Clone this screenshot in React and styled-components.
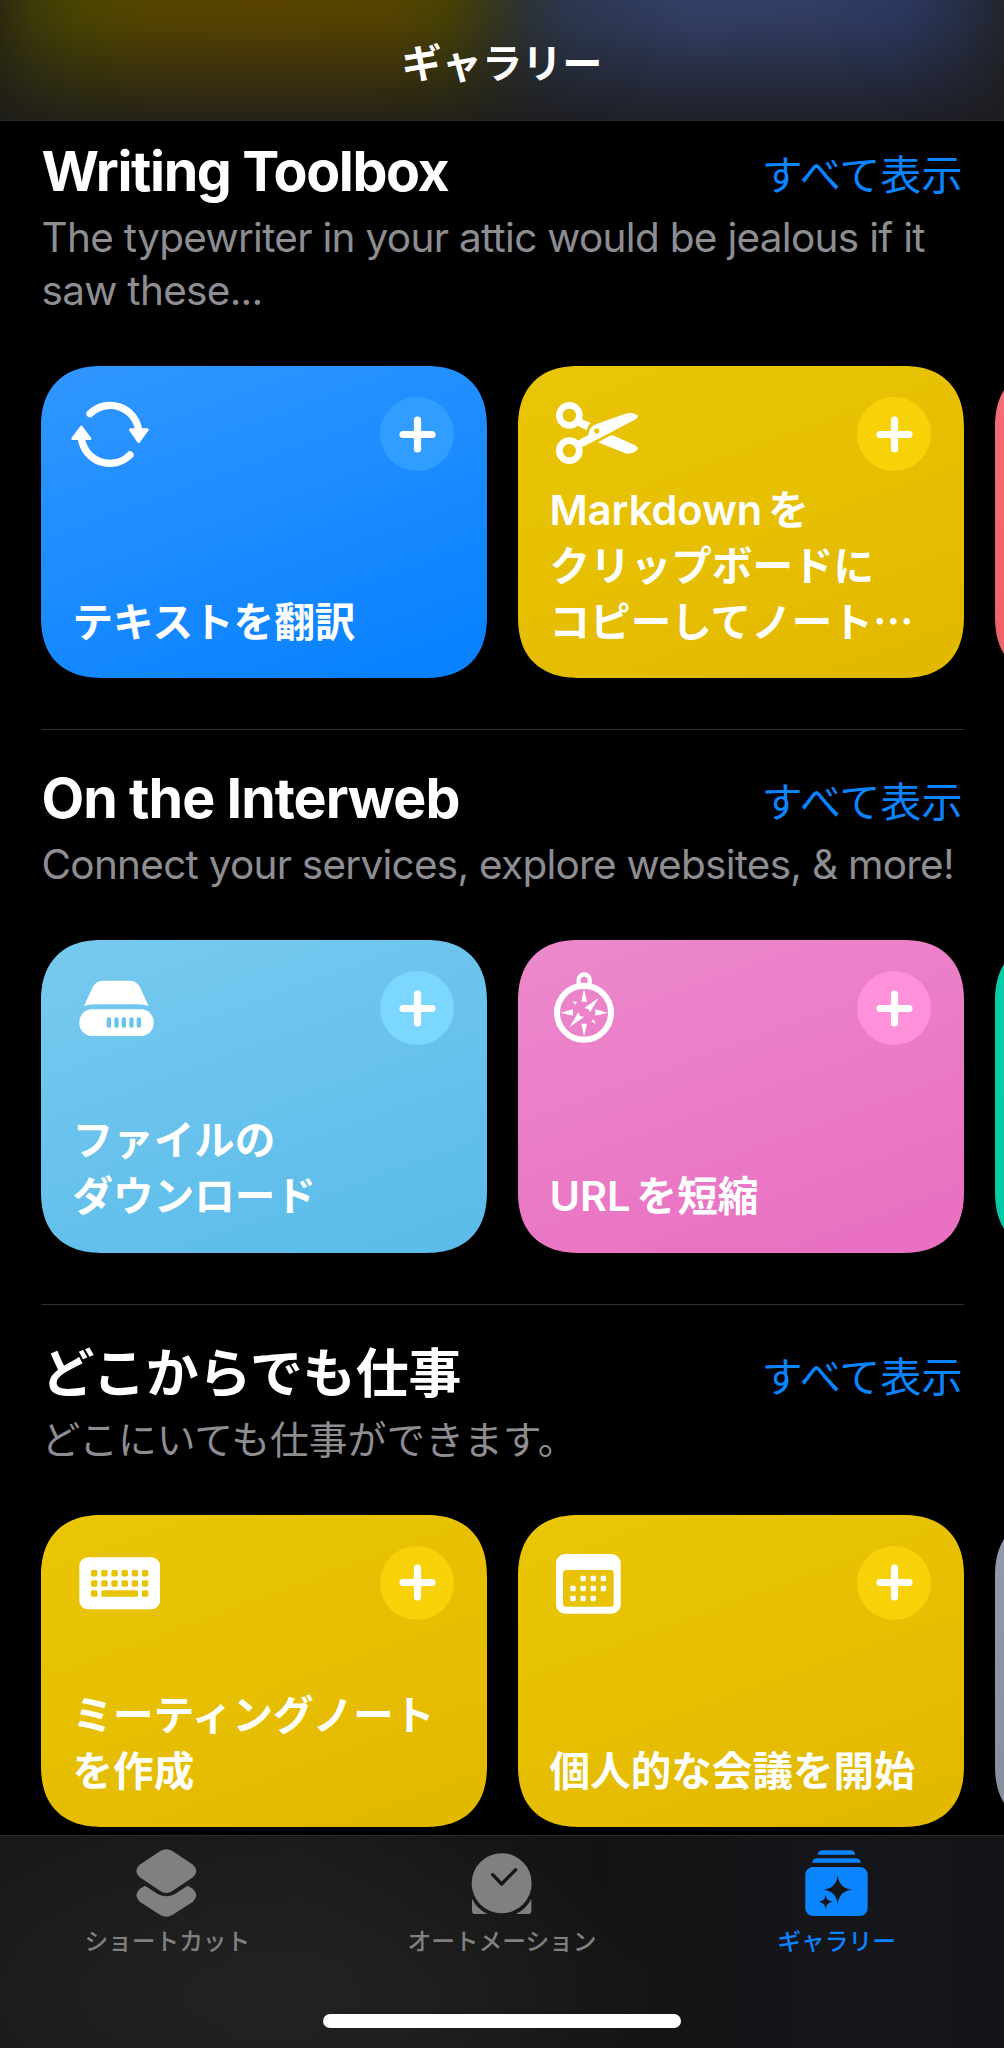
import React from "react";
import styled, { createGlobalStyle } from "styled-components";

const JP = `"Noto Sans CJK JP", "Inter", sans-serif`;
const LATIN = `"Inter", "Noto Sans CJK JP", sans-serif`;

const GlobalStyle = createGlobalStyle`
  body { margin: 0; background: #000; }
  *, *::before, *::after { box-sizing: border-box; }
`;

const Screen = styled.div`
  width: 1004px;
  height: 2048px;
  display: flex;
  flex-direction: column;
  overflow: hidden;
  background: #000;
  color: #fff;
  font-family: ${JP};
`;

const NavBar = styled.header`
  flex: none;
  height: 121px;
  display: flex;
  justify-content: center;
  align-items: flex-end;
  padding-bottom: 31px;
  border-bottom: 1px solid #2c2c2e;
  background:
    linear-gradient(to bottom, rgba(27, 26, 28, 0) 0%, rgba(27, 26, 28, 0.08) 20%, rgba(27, 26, 28, 0.83) 100%),
    linear-gradient(to right, #2e2b0e 0, #3e3b08 35px, #4b4500 80px, #564500 150px, #594400 270px, #564400 390px,
      #484203 445px, #38371c 490px, #2d3336 525px, #2c3750 570px, #333f66 690px, #323e64 800px, #2c3860 900px, #272f48 960px, #22252d 1004px);
`;

const NavTitle = styled.h1`
  margin: 0;
  font-size: 40.2px;
  line-height: 56px;
  font-weight: 600;
`;

const Feed = styled.main`
  flex: 1;
  min-height: 0;
  overflow: hidden;
  display: flex;
  flex-direction: column;
`;

const SectionBox = styled.section`
  flex: none;
  margin: 0 40.5px;
  padding: ${(p) => (p.$first ? "16px" : "34px")} 0 51px;
  border-bottom: 1px solid ${(p) => (p.$last ? "transparent" : "#303032")};
`;

const SectionHead = styled.div`
  display: flex;
  justify-content: space-between;
  height: 68px;
  padding: 0 1px 0 1px;
`;

const SectionTitle = styled.h2`
  margin: 0;
  white-space: nowrap;
  font-family: ${(p) => (p.$jp ? JP : LATIN)};
  font-size: ${(p) => (p.$jp ? 52.9 : 55.5)}px;
  line-height: ${(p) => (p.$jp ? 62 : 67)}px;
  font-weight: 700;
  letter-spacing: ${(p) => p.$track || 0}px;
`;

const ShowAll = styled.a`
  color: #0a84ff;
  font-size: 41.1px;
  line-height: 68px;
  padding-top: 1px;
  font-weight: 400;
`;

const Subtitle = styled.p`
  margin: 6px 0 ${(p) => (p.$jp ? 53 : 49)}px;
  padding-left: 1px;
  color: #8d8d92;
  font-family: ${(p) => (p.$jp ? JP : LATIN)};
  font-size: ${(p) => (p.$jp ? 38.8 : 40.5)}px;
  line-height: ${(p) => (p.$jp ? 49 : 53)}px;
  white-space: pre;
  letter-spacing: ${(p) => p.$track || 0}px;
`;

const CardRow = styled.div`
  display: flex;
  gap: 31px;
  margin-right: -41px;
  overflow: hidden;
`;

const CardBox = styled.article`
  flex: none;
  width: 446px;
  height: 312.3px;
  border-radius: 50px;
  padding: 31px 32.5px 30.3px 30px;
  display: flex;
  flex-direction: column;
  justify-content: space-between;
  background: linear-gradient(160deg, ${(p) => p.$from}, ${(p) => p.$to} 90%);

  @supports (corner-shape: superellipse(1.25)) {
    border-radius: 62px;
    corner-shape: superellipse(1.25);
  }
`;

const CardTop = styled.div`
  display: flex;
  justify-content: space-between;
  height: 74px;
`;

const AddButton = styled.button`
  width: 74px;
  height: 74px;
  padding: 0;
  border: 0;
  border-radius: 50%;
  background: ${(p) => p.$tint};
  display: flex;
  align-items: center;
  justify-content: center;
`;

const CardTitle = styled.h3`
  margin: 0;
  padding-left: 2px;
  display: flex;
  flex-direction: column;
  font-size: 40.6px;
  line-height: 56px;
  font-weight: 600;
  white-space: nowrap;
`;

const TitleLine = styled.span`
  display: flex;
  align-items: baseline;
  gap: 6px;
  height: 56px;
`;

const Latin = styled.span`
  font-family: ${LATIN};
  font-size: 41.5px;
  line-height: 1;
`;

const TabBar = styled.nav`
  flex: none;
  height: 213px;
  border-top: 1px solid #2b2b2d;
  display: flex;
  flex-direction: column;
  justify-content: space-between;
  align-items: center;
  padding-bottom: 20px;
  background:
    radial-gradient(ellipse 420px 170px at 28% 75%, rgba(36, 36, 36, 0.85), rgba(30, 30, 30, 0)),
    linear-gradient(to right, #191919 0, #1b1b1b 300px, #131313 600px, #14161a 850px, #131519 1004px);
`;

const Tabs = styled.div`
  width: 100%;
  display: grid;
  grid-template-columns: repeat(3, 1fr);
  padding-top: 11px;
`;

const Tab = styled.a`
  display: flex;
  flex-direction: column;
  align-items: center;
  color: ${(p) => (p.$active ? "#0a84ff" : "#808080")};
`;

const TabLabel = styled.span`
  font-size: 23.7px;
  line-height: 34px;
  margin-top: 4px;
  font-weight: 500;
`;

const HomeIndicator = styled.div`
  width: 358px;
  height: 14px;
  border-radius: 7px;
  background: #fff;
`;

const Glyph = ({ x, y, children }) => (
  <svg width="96" height="74" viewBox={`${x} ${y} 288 222`} fill="#fff">
    {children}
  </svg>
);

const SyncIcon = () => (
  <Glyph x={122} y={141}>
    <g fill="none" stroke="#fff" strokeWidth="22" strokeLinecap="round">
      <path d="M179 191 A86 86 0 0 1 325 242" />
      <path d="M299 315 A86 86 0 0 1 153 264" />
    </g>
    <g stroke="#fff" strokeWidth="8" strokeLinejoin="round">
      <path d="M300 239 H351 L325 275 Z" />
      <path d="M127 266 H179 L153 231 Z" />
    </g>
  </Glyph>
);

const ScissorsIcon = () => (
  <Glyph x={144} y={141}>
    <g fill="none" stroke="#fff" strokeWidth="20">
      <circle cx="208" cy="196" r="30" />
      <circle cx="208" cy="302" r="30" />
    </g>
    <path d="M243 207 L272 219 Q262 228 260 241 L230 226 Z" />
    <path d="M294 277 L330 257 Q336 254 342 257 L405 286 Q413 291 414 298 Q400 314 376 310 Z" />
    <path
      fillRule="evenodd"
      d="M230 273 L258 259 Q266 256 267 245 Q270 230 290 222 L376 191 Q402 184 414 198 Q410 209 396 214 L248 291 Z M290 235 a8 8 0 1 0 0.1 0 Z"
    />
  </Glyph>
);

const DriveIcon = () => (
  <Glyph x={122} y={154}>
    <path d="M161 259 L186 205 Q196 183 217 183 H299 Q319 183 329 203 L355 259 Q340 254 320 254 H195 Q175 254 161 259 Z" />
    <rect x="147" y="269" width="223" height="80" rx="38" />
    {[229, 252, 274, 297, 319].map((x) => (
      <rect key={x} x={x} y="293" width="13" height="31" rx="5" fill="#68c4ed" />
    ))}
  </Glyph>
);

const CompassIcon = () => (
  <Glyph x={144} y={154}>
    <circle cx="252" cy="279" r="81" fill="none" stroke="#fff" strokeWidth="18" />
    <path d="M236 194 V181 A16 16 0 0 1 269 181 V194" fill="none" stroke="#fff" strokeWidth="13" />
    <path d="M252 207 L261 246 H244 Z M252 352 L261 312 H244 Z M181 279 L219 269 V288 Z M324 279 L286 269 V288 Z" />
    <path d="M296 235 L270 278 L265 268 L253 265 Z M209 322 L235 278 L240 288 L252 292 Z" />
    <path d="M217 243 L231 248 L226 255 Z M288 312 L274 306 L280 299 Z" />
  </Glyph>
);

const KeyboardIcon = () => (
  <Glyph x={122} y={136}>
    <rect x="147" y="170" width="242" height="156" rx="26" />
    <g fill="#e8c305">
      {[208, 238.5].map((y) =>
        [0, 1, 2, 3, 4, 5].map((i) => (
          <rect key={`${y}-${i}`} x={182 + i * 30.5} y={y} width="19.5" height="19.5" rx="5" />
        ))
      )}
      <rect x="182" y="269" width="19.5" height="19.5" rx="5" />
      <rect x="213" y="269" width="110" height="19.5" rx="5" />
      <rect x="334.5" y="269" width="19.5" height="19.5" rx="5" />
    </g>
  </Glyph>
);

const CalendarIcon = () => (
  <Glyph x={144} y={136}>
    <rect x="168" y="160" width="194" height="179" rx="27" />
    <rect x="189" y="208" width="152" height="110" rx="9" fill="#e8c305" />
    {[[1, 2, 3], [0, 1, 2, 3], [0, 1, 2]].map((cols, r) =>
      cols.map((c) => (
        <rect key={`${r}-${c}`} x={211 + c * 30.4} y={225.5 + r * 30} width="16" height="16" rx="3.5" />
      ))
    )}
  </Glyph>
);

const PlusIcon = () => (
  <svg width="37" height="37" viewBox="0 0 37 37" stroke="#fff" strokeWidth="7.2" strokeLinecap="round">
    <path d="M18.5 4 V33 M4 18.5 H33" />
  </svg>
);

const TabGlyph = ({ x, children }) => (
  <svg width="72" height="72" viewBox={`${x} 36 216 216`} fill="currentColor">
    {children}
  </svg>
);

const ShortcutsIcon = () => (
  <TabGlyph x={64}>
    <path d="M153 47 Q170 38 187 47 L250 89 Q270 108 250 127 L188 168 Q170 180 152 168 L90 127 Q70 108 90 89 Z" />
    <path d="M106 152 L90 162 Q70 181 90 200 L152 240 Q170 251 188 240 L250 200 Q270 181 250 162 L234 152 L196 177 Q170 191 144 177 Z" />
  </TabGlyph>
);

const AutomationIcon = () => (
  <TabGlyph x={1068}>
    <circle cx="1175" cy="144.5" r="90" />
    <path d="M1086 191 Q1098 219 1132 237 H1096 Q1086 237 1086 227 Z" />
    <path d="M1264 191 Q1252 219 1218 237 H1254 Q1264 237 1264 227 Z" />
    <path
      d="M1148 119 L1175 147 L1217 104"
      fill="none"
      stroke="#171717"
      strokeWidth="10"
      strokeLinecap="round"
      strokeLinejoin="round"
    />
  </TabGlyph>
);

const GalleryIcon = () => (
  <TabGlyph x={121}>
    <path d="M171 59 Q173 46 186 46 H269 Q281 46 284 59 Z" />
    <path d="M154 83 Q157 70 171 70 H285 Q298 70 301 83 Z" />
    <rect x="134" y="96" width="187" height="147" rx="23" />
    <g fill="#141518">
      <path d="M231 121 Q235 160 273 164 Q235 168 231 208 Q227 168 189 164 Q227 160 231 121 Z" />
      <path d="M195 179 Q197 198 216 200 Q197 202 195 222 Q193 202 174 200 Q193 198 195 179 Z" />
    </g>
  </TabGlyph>
);

const YELLOW = { from: "#eac606", to: "#e3b900", tint: "#f8d208" };
const BLUE = { from: "#3197ff", to: "#0a82ff", tint: "#319eff" };
const CYAN = { from: "#77caef", to: "#5cbcea", tint: "#7bd7ff" };
const PINK = { from: "#ec89cc", to: "#e970c2", tint: "#ff90da" };
const RED = { from: "#f56f76", to: "#ec5a61", tint: "#ff8a8f" };
const TEAL = { from: "#0accaa", to: "#00c8a6", tint: "#2fe0c0" };
const GRAY = { from: "#929ba9", to: "#828b99", tint: "#a5adba" };

const Card = ({ color, icon, lines }) => (
  <CardBox $from={color.from} $to={color.to}>
    {icon && (
      <CardTop>
        {icon}
        <AddButton $tint={color.tint} aria-label="追加">
          <PlusIcon />
        </AddButton>
      </CardTop>
    )}
    {lines && (
      <CardTitle>
        {lines.map((line, i) => (
          <TitleLine key={i}>{line}</TitleLine>
        ))}
      </CardTitle>
    )}
  </CardBox>
);

const Section = ({ title, subtitle, jp, track, subTrack, first, last, children }) => (
  <SectionBox $first={first} $last={last}>
    <SectionHead>
      <SectionTitle $jp={jp} $track={track}>{title}</SectionTitle>
      <ShowAll>すべて表示</ShowAll>
    </SectionHead>
    <Subtitle $jp={jp} $track={subTrack}>{subtitle}</Subtitle>
    <CardRow>{children}</CardRow>
  </SectionBox>
);

export default function App() {
  return (
    <Screen lang="ja">
      <GlobalStyle />
      <NavBar>
        <NavTitle>ギャラリー</NavTitle>
      </NavBar>
      <Feed>
        <Section
          first
          title="Writing Toolbox"
          track={-1.4}
          subTrack={-0.7}
          subtitle={"The typewriter in your attic would be jealous if it\nsaw these..."}
        >
          <Card color={BLUE} icon={<SyncIcon />} lines={["テキストを翻訳"]} />
          <Card
            color={YELLOW}
            icon={<ScissorsIcon />}
            lines={[
              <>
                <Latin>Markdown</Latin>
                <span>を</span>
              </>,
              "クリップボードに",
              "コピーしてノート…",
            ]}
          />
          <Card color={RED} />
        </Section>
        <Section
          title="On the Interweb"
          track={-0.95}
          subTrack={-0.74}
          subtitle="Connect your services, explore websites, & more!"
        >
          <Card color={CYAN} icon={<DriveIcon />} lines={["ファイルの", "ダウンロード"]} />
          <Card
            color={PINK}
            icon={<CompassIcon />}
            lines={[
              <>
                <Latin>URL</Latin>
                <span>を短縮</span>
              </>,
            ]}
          />
          <Card color={TEAL} />
        </Section>
        <Section last jp title="どこからでも仕事" subtitle="どこにいても仕事ができます。">
          <Card color={YELLOW} icon={<KeyboardIcon />} lines={["ミーティングノート", "を作成"]} />
          <Card color={YELLOW} icon={<CalendarIcon />} lines={["個人的な会議を開始"]} />
          <Card color={GRAY} />
        </Section>
      </Feed>
      <TabBar>
        <Tabs>
          <Tab>
            <ShortcutsIcon />
            <TabLabel>ショートカット</TabLabel>
          </Tab>
          <Tab>
            <AutomationIcon />
            <TabLabel>オートメーション</TabLabel>
          </Tab>
          <Tab $active>
            <GalleryIcon />
            <TabLabel>ギャラリー</TabLabel>
          </Tab>
        </Tabs>
        <HomeIndicator />
      </TabBar>
    </Screen>
  );
}
